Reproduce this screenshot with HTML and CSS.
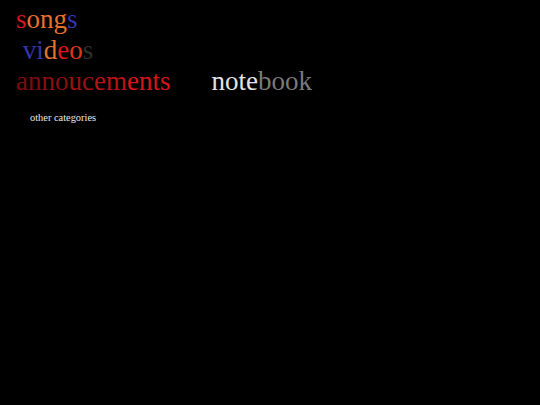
FILE: index.html
```html
<!DOCTYPE html>
<html>
<head>
<meta charset="utf-8">
<link rel="stylesheet" href="styles.css">
</head>
<body>
<div class="page">
  <div class="menu">
    <div class="line"><span class="red">s</span><span class="orange">ong</span><span class="blue">s</span></div>
    <div class="line">&nbsp;<span class="blue">vi</span><span class="orange">d</span><span class="red">e</span><span class="redorange">o</span><span class="grey">s</span></div>
    <div class="line row">
      <span class="ann"><span class="a1">an</span><span class="a2">no</span><span class="a3">uc</span><span class="a4">em</span><span class="a5">ents</span></span>
      <span class="notebook"><span class="light">note</span><span class="mid">book</span></span>
    </div>
  </div>
  <div class="other">other categories</div>
</div>
</body>
</html>
```
FILE: styles.css
```css
html, body {
  margin: 0;
  padding: 0;
  background: #000;
}
.page {
  padding: 4px 0 0 16px;
  font-family: "Liberation Serif", "Times New Roman", serif;
}
.menu {
  font-size: 27px;
  line-height: 31px;
}
.line {
  white-space: nowrap;
}
.row {
  display: flex;
  gap: 41px;
}
.red { color: #d8171a; }
.orange { color: #e5722c; }
.blue { color: #3434ac; }
.redorange { color: #e2341c; }
.grey { color: #2e2e2e; }
.a1 { color: #7e0c0e; }
.a2 { color: #8a0e10; }
.a3 { color: #9c1012; }
.a4 { color: #b81214; }
.a5 { color: #d81518; }
.light { color: #e4e4e4; }
.mid { color: #7a7a7a; }
.other {
  margin: 15px 0 0 14px;
  font-size: 10.4px;
  color: #e8e8e8;
}
```
